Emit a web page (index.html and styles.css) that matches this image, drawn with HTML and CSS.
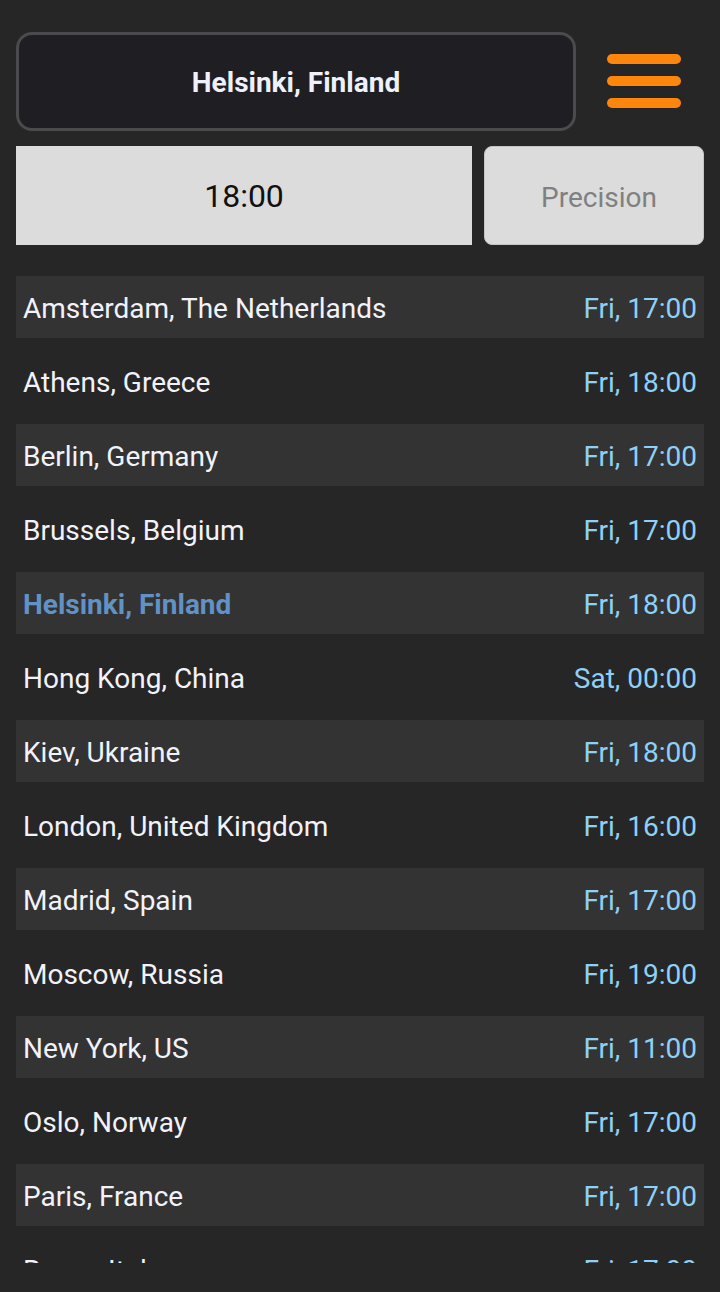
FILE: index.html
```html
<!DOCTYPE html>
<html>
<head>
<meta charset="utf-8">
<link rel="stylesheet" href="styles.css">
</head>
<body>
<div class="app">
  <div class="top-row">
    <div class="city-box">Helsinki, Finland</div>
    <div class="menu">
      <span class="bar"></span><span class="bar"></span><span class="bar"></span>
    </div>
  </div>
  <div class="time-row">
    <div class="time-box">18:00</div>
    <div class="precision">Precision</div>
  </div>
  <div class="list">
    <div class="row alt"><span class="name">Amsterdam, The Netherlands</span><span class="time">Fri, 17:00</span></div>
    <div class="row"><span class="name">Athens, Greece</span><span class="time">Fri, 18:00</span></div>
    <div class="row alt"><span class="name">Berlin, Germany</span><span class="time">Fri, 17:00</span></div>
    <div class="row"><span class="name">Brussels, Belgium</span><span class="time">Fri, 17:00</span></div>
    <div class="row alt"><span class="name current">Helsinki, Finland</span><span class="time">Fri, 18:00</span></div>
    <div class="row"><span class="name">Hong Kong, China</span><span class="time">Sat, 00:00</span></div>
    <div class="row alt"><span class="name">Kiev, Ukraine</span><span class="time">Fri, 18:00</span></div>
    <div class="row"><span class="name">London, United Kingdom</span><span class="time">Fri, 16:00</span></div>
    <div class="row alt"><span class="name">Madrid, Spain</span><span class="time">Fri, 17:00</span></div>
    <div class="row"><span class="name">Moscow, Russia</span><span class="time">Fri, 19:00</span></div>
    <div class="row alt"><span class="name">New York, US</span><span class="time">Fri, 11:00</span></div>
    <div class="row"><span class="name">Oslo, Norway</span><span class="time">Fri, 17:00</span></div>
    <div class="row alt"><span class="name">Paris, France</span><span class="time">Fri, 17:00</span></div>
    <div class="row"><span class="name">Rome, Italy</span><span class="time">Fri, 17:00</span></div>
  </div>
</div>
</body>
</html>
```
FILE: styles.css
```css
html, body {
  margin: 0;
  padding: 0;
  background: #262626;
  height: 100%;
}
body {
  font-family: Roboto, "Liberation Sans", sans-serif;
  overflow: hidden;
}
.app {
  padding: 32px 16px 0 16px;
  display: flex;
  flex-direction: column;
}
.top-row {
  display: flex;
  align-items: stretch;
  height: 99px;
}
.city-box {
  width: 560px;
  box-sizing: border-box;
  border: 3px solid #4b4b4d;
  border-radius: 16px;
  background: #1f1f23;
  color: #eef0fa;
  font-weight: 700;
  font-size: 28px;
  display: flex;
  align-items: center;
  justify-content: center;
  padding-top: 2px;
}
.menu {
  flex: 1;
  display: flex;
  flex-direction: column;
  align-items: center;
  justify-content: center;
  gap: 12px;
  padding-left: 8px;
  padding-bottom: 2px;
}
.bar {
  display: block;
  width: 74px;
  height: 10px;
  border-radius: 5px;
  background: #ff860d;
}
.time-row {
  display: flex;
  gap: 12px;
  margin-top: 15px;
  height: 99px;
}
.time-box {
  width: 456px;
  background: #dcdcdc;
  color: #111;
  font-size: 32px;
  display: flex;
  align-items: center;
  justify-content: center;
}
.precision {
  flex: 1;
  box-sizing: border-box;
  background: #dcdcdc;
  border: 1px solid #c4c4c4;
  border-radius: 8px;
  color: #808080;
  font-size: 28px;
  display: flex;
  align-items: center;
  justify-content: center;
  padding: 3px 0 0 10px;
}
.list {
  margin-top: 31px;
  height: 987px;
  overflow: hidden;
  display: flex;
  flex-direction: column;
  gap: 12px;
}
.row {
  flex: none;
  height: 62px;
  display: flex;
  align-items: center;
  justify-content: space-between;
  padding: 2px 7px 0 7px;
  box-sizing: border-box;
  font-size: 28px;
}
.row.alt {
  background: #333333;
}
.name {
  color: #f2f2fa;
}
.name.current {
  color: #6291c6;
  font-weight: 700;
}
.time {
  color: #8fd0f6;
}
```
